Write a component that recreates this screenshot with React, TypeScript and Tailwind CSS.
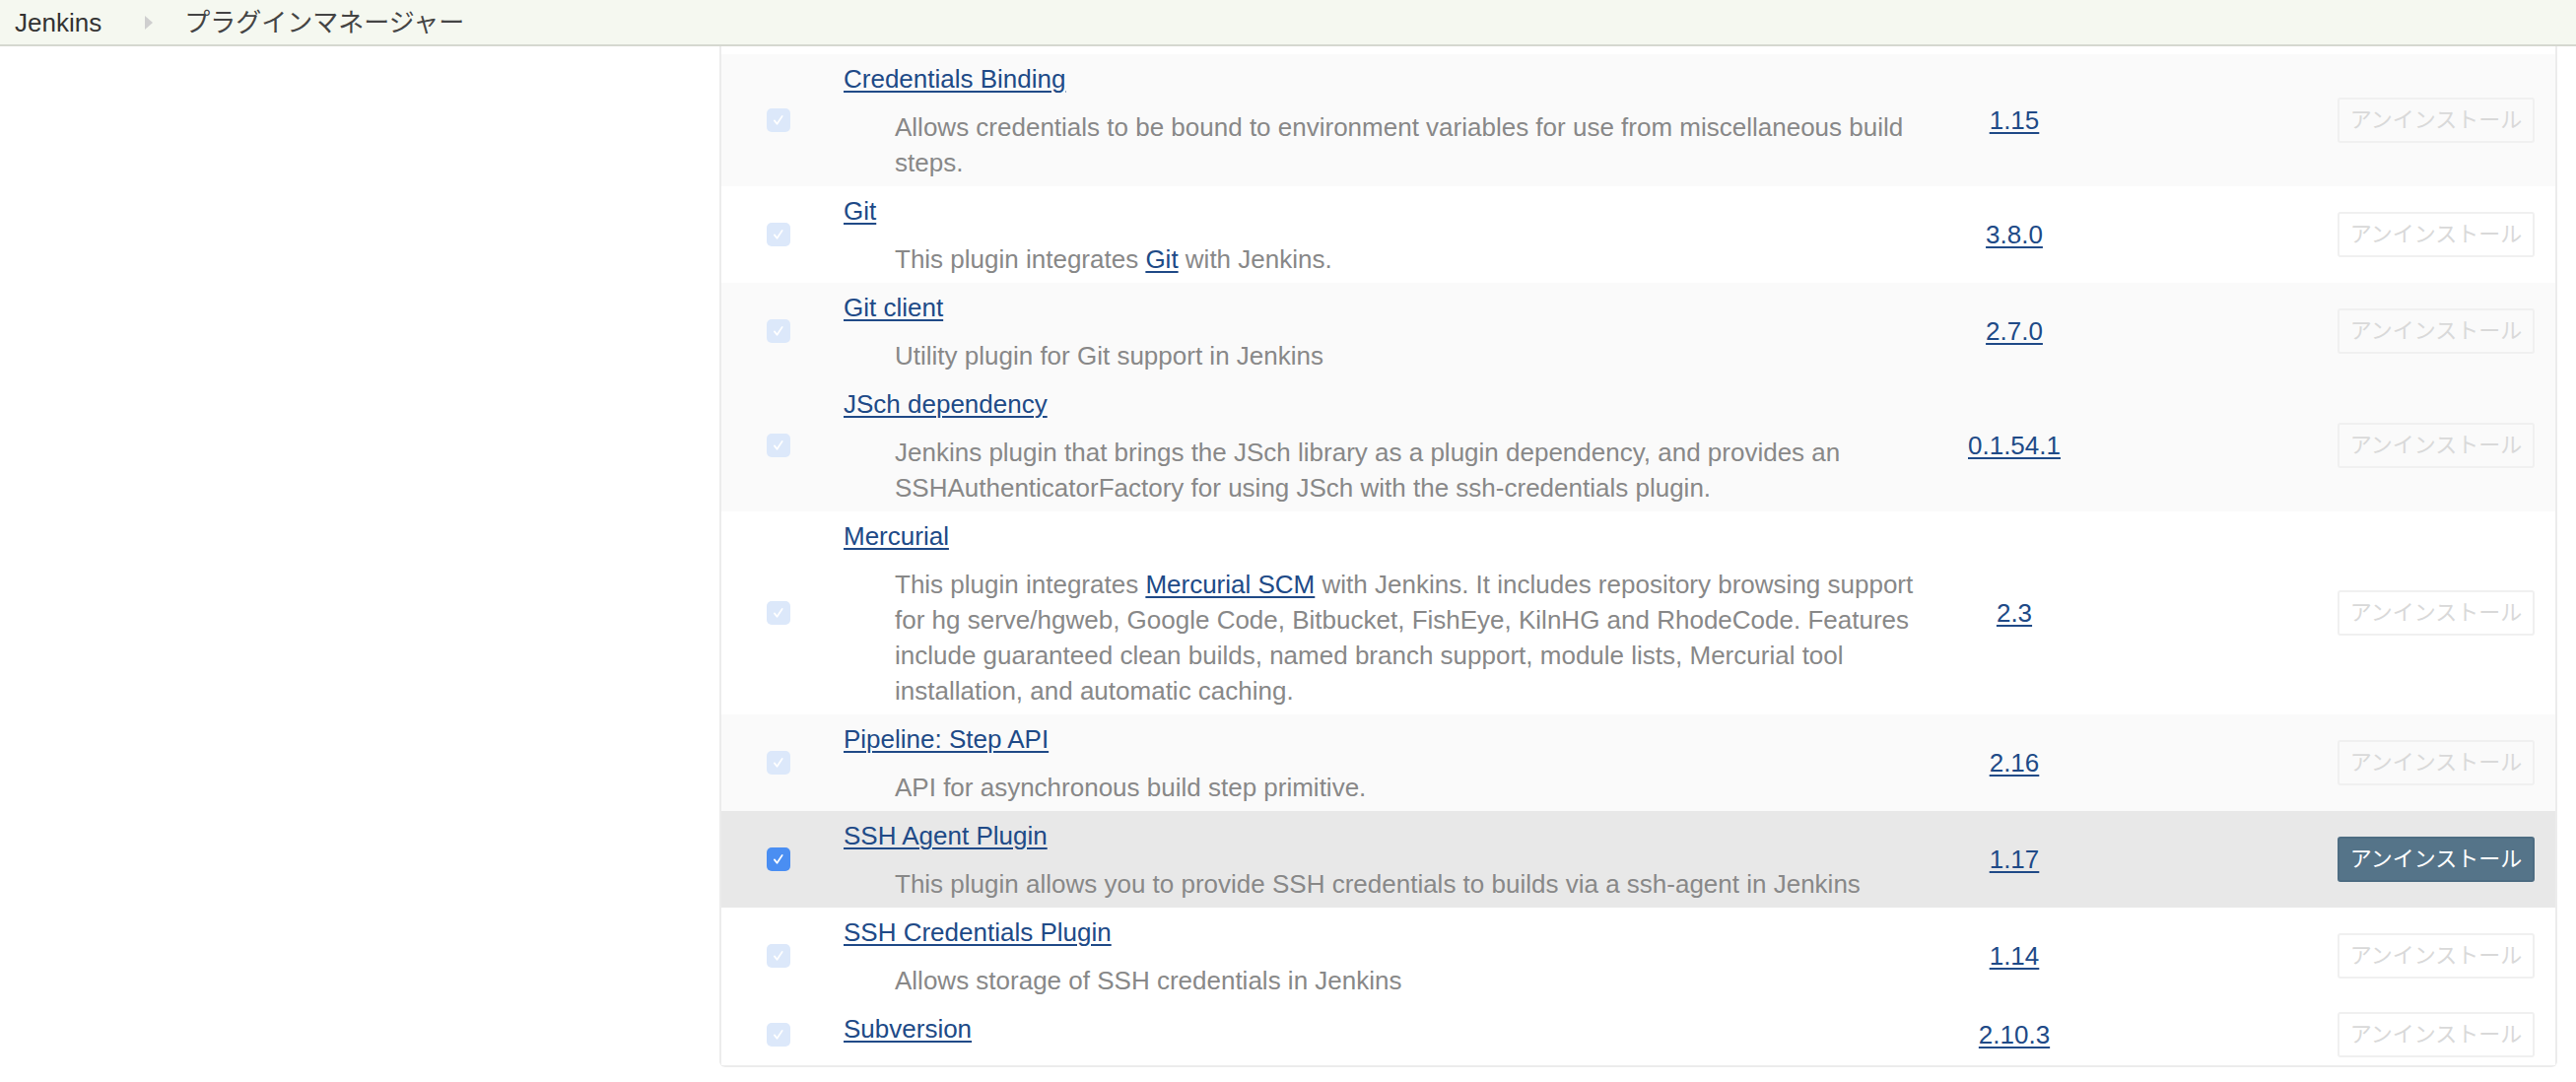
import React from 'react';

type Plugin = {
  name: string;
  desc: React.ReactNode;
  version: string;
  bg: 'gray' | 'white' | 'active';
};

const Link = ({ children }: { children: React.ReactNode }) => (
  <a href="#" className="text-[#204a87] underline decoration-[2px] underline-offset-[3px]">
    {children}
  </a>
);

const plugins: Plugin[] = [
  {
    name: 'Credentials Binding',
    desc: 'Allows credentials to be bound to environment variables for use from miscellaneous build steps.',
    version: '1.15',
    bg: 'gray',
  },
  {
    name: 'Git',
    desc: (
      <>
        This plugin integrates <Link>Git</Link> with Jenkins.
      </>
    ),
    version: '3.8.0',
    bg: 'white',
  },
  {
    name: 'Git client',
    desc: 'Utility plugin for Git support in Jenkins',
    version: '2.7.0',
    bg: 'gray',
  },
  {
    name: 'JSch dependency',
    desc: 'Jenkins plugin that brings the JSch library as a plugin dependency, and provides an SSHAuthenticatorFactory for using JSch with the ssh-credentials plugin.',
    version: '0.1.54.1',
    bg: 'gray',
  },
  {
    name: 'Mercurial',
    desc: (
      <>
        This plugin integrates <Link>Mercurial SCM</Link> with Jenkins. It includes repository browsing support for hg
        serve/hgweb, Google Code, Bitbucket, FishEye, KilnHG and RhodeCode. Features include guaranteed clean builds,
        named branch support, module lists, Mercurial tool installation, and automatic caching.
      </>
    ),
    version: '2.3',
    bg: 'white',
  },
  {
    name: 'Pipeline: Step API',
    desc: 'API for asynchronous build step primitive.',
    version: '2.16',
    bg: 'gray',
  },
  {
    name: 'SSH Agent Plugin',
    desc: 'This plugin allows you to provide SSH credentials to builds via a ssh-agent in Jenkins',
    version: '1.17',
    bg: 'active',
  },
  {
    name: 'SSH Credentials Plugin',
    desc: 'Allows storage of SSH credentials in Jenkins',
    version: '1.14',
    bg: 'white',
  },
  {
    name: 'Subversion',
    desc: null,
    version: '2.10.3',
    bg: 'white',
  },
];

const Checkbox = ({ active }: { active: boolean }) => (
  <span
    className={`flex h-[24px] w-[24px] items-center justify-center rounded-[5px] ${
      active ? 'bg-[#4a8ef2]' : 'bg-[#dce8fa]'
    }`}
  >
    <svg viewBox="0 0 24 24" className="h-[18px] w-[18px]" fill="none">
      <path d="M6.5 12.5 L10 17 L17 6.5" stroke="white" strokeWidth="2.4" strokeLinecap="round" strokeLinejoin="round" />
    </svg>
  </span>
);

export default function App() {
  return (
    <div
      className="min-h-screen bg-white text-[26px] leading-[36px] text-[#333]"
      style={{ fontFamily: '"Liberation Sans", "Noto Sans CJK JP", sans-serif' }}
    >
      {/* breadcrumb bar */}
      <div className="flex h-[47px] items-center border-b-2 border-[#d5d8d0] bg-[#f5f8f0] pl-[15px]">
        <span className="text-[#333]">Jenkins</span>
        <svg viewBox="0 0 8 14" className="ml-[44px] h-[14px] w-[8px]">
          <path d="M0 0 L8 7 L0 14 Z" fill="#cfcfcf" />
        </svg>
        <span className="ml-[32px] text-[#444]">プラグインマネージャー</span>
      </div>

      {/* installed plugins list */}
      <div className="ml-[730px] w-[1865px] rounded-b-[6px] border-x-2 border-b-2 border-[#ececec] pt-[8px]">
        {plugins.map((p) => {
          const active = p.bg === 'active';
          const rowBg = active ? 'bg-[#e8e8e8]' : p.bg === 'gray' ? 'bg-[#fafafa]' : 'bg-white';
          return (
            <div key={p.name} className={`grid grid-cols-[116px_1122px_148px_1fr] items-center ${rowBg}`}>
              <div className="flex justify-center">
                <Checkbox active={active} />
              </div>
              <div className="pb-[6px] pl-[8px] pt-[7px]">
                <div>
                  <Link>{p.name}</Link>
                </div>
                <div className="mt-[13px] w-[1109px] pl-[52px] text-[#888]">{p.desc}</div>
              </div>
              <div className="text-center">
                <Link>{p.version}</Link>
              </div>
              <div className="flex justify-end pr-[21px]">
                <button
                  className={`h-[46px] w-[200px] rounded-[3px] border-2 text-[22px] leading-[30px] ${
                    active
                      ? 'border-[#4d6c82] bg-[#557489] text-white'
                      : 'border-[#f0f0f0] bg-transparent text-[#d9d9d9]'
                  }`}
                >
                  アンインストール
                </button>
              </div>
            </div>
          );
        })}
      </div>
    </div>
  );
}
